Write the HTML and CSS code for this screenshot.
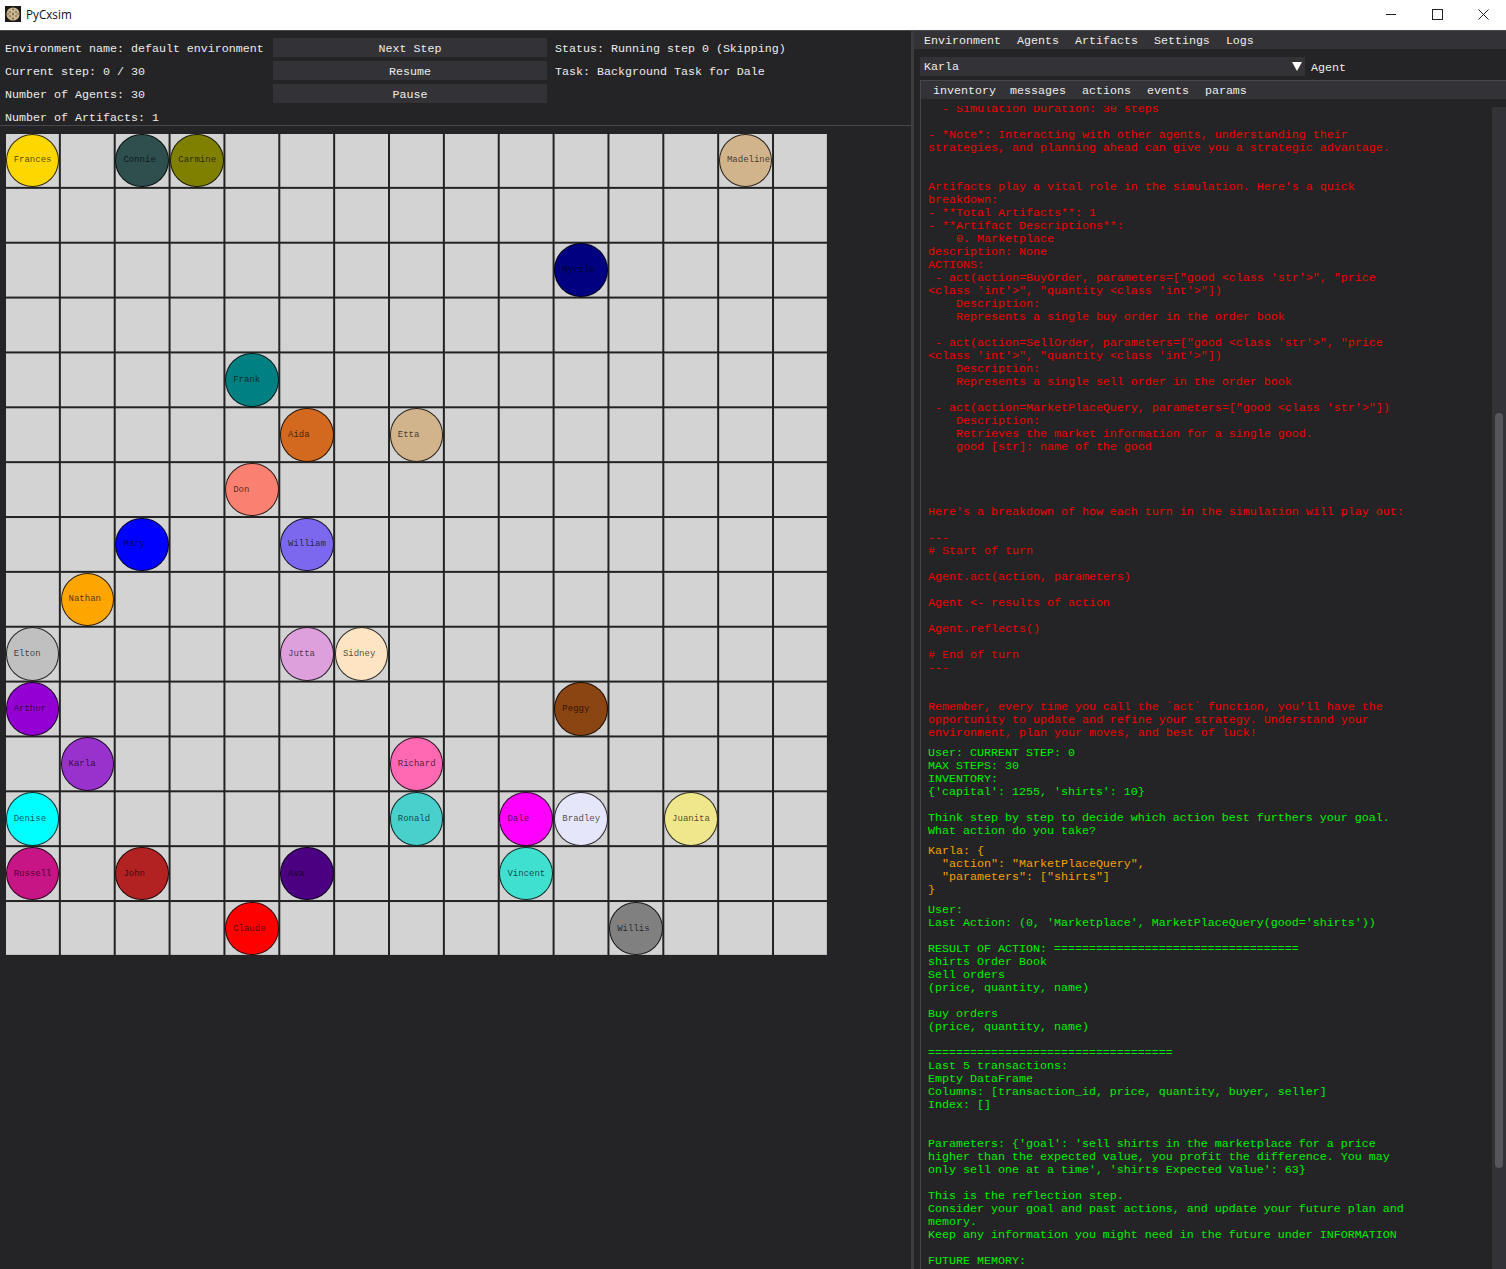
FILE: index.html
```html
<!DOCTYPE html>
<html lang="en">
<head>
  <meta charset="UTF-8" />
  <title>PyCxsim</title>
  <link rel="stylesheet" href="styles.css">
</head>
<body>
  <!-- window title bar -->
  <header class="titlebar">
    <svg class="app-icon" width="16" height="16" viewBox="0 0 16 16">
      <rect width="16" height="16" fill="#1c1a16"/>
      <circle cx="8" cy="8" r="6.6" fill="#c9b48e"/>
      <g fill="#5d4a30">
        <circle cx="8" cy="8" r="1"/><circle cx="5" cy="6" r=".8"/><circle cx="11" cy="6" r=".8"/>
        <circle cx="5" cy="10" r=".8"/><circle cx="11" cy="10" r=".8"/><circle cx="8" cy="3.6" r=".8"/>
        <circle cx="8" cy="12.4" r=".8"/><circle cx="3" cy="8" r=".7"/><circle cx="13" cy="8" r=".7"/>
      </g>
      <g fill="#f0e6cc">
        <circle cx="6.5" cy="4.6" r=".6"/><circle cx="9.8" cy="8" r=".6"/><circle cx="6.2" cy="8" r=".6"/><circle cx="9.5" cy="11.4" r=".6"/>
      </g>
    </svg>
    <span class="app-name">PyCxsim</span>
    <div class="win-controls">
      <span class="win-btn"><svg width="10" height="10" viewBox="0 0 10 10"><path d="M0 5.5H10" stroke="#222" fill="none"/></svg></span>
      <span class="win-btn"><svg width="11" height="11" viewBox="0 0 11 11"><rect x=".5" y=".5" width="10" height="10" stroke="#222" fill="none"/></svg></span>
      <span class="win-btn"><svg width="11" height="11" viewBox="0 0 11 11"><path d="M.5 .5L10.5 10.5M10.5 .5L.5 10.5" stroke="#222" fill="none"/></svg></span>
    </div>
  </header>

  <div class="app">
    <!-- simulation view -->
    <main class="sim-panel">
      <div class="controls">
        <span class="label">Environment name: default environment</span>
        <button class="btn">Next Step</button>
        <span class="label">Status: Running step 0 (Skipping)</span>
        <span class="label">Current step: 0 / 30</span>
        <button class="btn">Resume</button>
        <span class="label">Task: Background Task for Dale</span>
        <span class="label">Number of Agents: 30</span>
        <button class="btn">Pause</button>
        <span></span>
        <span class="label">Number of Artifacts: 1</span>
      </div>
      <div class="board">
        <div class="agent" style="grid-area:1/1;background:#ffd700">Frances</div>
        <div class="agent" style="grid-area:1/3;background:#2f4f4f">Connie</div>
        <div class="agent" style="grid-area:1/4;background:#808000">Carmine</div>
        <div class="agent" style="grid-area:1/14;background:#d2b48c">Madeline</div>
        <div class="agent" style="grid-area:3/11;background:#000080">Myrtle</div>
        <div class="agent" style="grid-area:5/5;background:#008080">Frank</div>
        <div class="agent" style="grid-area:6/6;background:#d2691e">Aida</div>
        <div class="agent" style="grid-area:6/8;background:#d2b48c">Etta</div>
        <div class="agent" style="grid-area:7/5;background:#fa8072">Don</div>
        <div class="agent" style="grid-area:8/3;background:#0000ff">Mary</div>
        <div class="agent" style="grid-area:8/6;background:#7b68ee">William</div>
        <div class="agent" style="grid-area:9/2;background:#ffa500">Nathan</div>
        <div class="agent" style="grid-area:10/1;background:#c0c0c0">Elton</div>
        <div class="agent" style="grid-area:10/6;background:#dda0dd">Jutta</div>
        <div class="agent" style="grid-area:10/7;background:#ffe4c4">Sidney</div>
        <div class="agent" style="grid-area:11/1;background:#9400d3">Arthur</div>
        <div class="agent" style="grid-area:11/11;background:#8b4513">Peggy</div>
        <div class="agent" style="grid-area:12/2;background:#9932cc">Karla</div>
        <div class="agent" style="grid-area:12/8;background:#ff69b4">Richard</div>
        <div class="agent" style="grid-area:13/1;background:#00ffff">Denise</div>
        <div class="agent" style="grid-area:13/8;background:#48d1cc">Ronald</div>
        <div class="agent" style="grid-area:13/10;background:#ff00ff">Dale</div>
        <div class="agent" style="grid-area:13/11;background:#e6e6fa">Bradley</div>
        <div class="agent" style="grid-area:13/13;background:#f0e68c">Juanita</div>
        <div class="agent" style="grid-area:14/1;background:#c71585">Russell</div>
        <div class="agent" style="grid-area:14/3;background:#b22222">John</div>
        <div class="agent" style="grid-area:14/6;background:#4b0082">Ava</div>
        <div class="agent" style="grid-area:14/10;background:#40e0d0">Vincent</div>
        <div class="agent" style="grid-area:15/5;background:#ff0000">Claude</div>
        <div class="agent" style="grid-area:15/12;background:#808080">Willis</div>
      </div>
    </main>

    <!-- inspector -->
    <aside class="side-panel">
      <nav class="menubar">
        <span>Environment</span>
        <span>Agents</span>
        <span>Artifacts</span>
        <span>Settings</span>
        <span>Logs</span>
      </nav>
      <div class="agent-row">
        <div class="combo">
          <span class="combo-value">Karla</span>
          <span class="combo-arrow"></span>
        </div>
        <span class="label">Agent</span>
      </div>
      <section class="child-win">
        <div class="tabbar">
          <span>inventory</span>
          <span>messages</span>
          <span>actions</span>
          <span>events</span>
          <span>params</span>
        </div>
        <div class="tab-body">
          <div class="log">
            <div class="log-inner">
<pre class="msg msg-system">  - Simulation Duration: 30 steps

- *Note*: Interacting with other agents, understanding their
strategies, and planning ahead can give you a strategic advantage.


Artifacts play a vital role in the simulation. Here's a quick
breakdown:
- **Total Artifacts**: 1
- **Artifact Descriptions**:
    0. Marketplace
description: None
ACTIONS:
 - act(action=BuyOrder, parameters=["good &lt;class 'str'&gt;", "price
&lt;class 'int'&gt;", "quantity &lt;class 'int'&gt;"])
    Description:
    Represents a single buy order in the order book

 - act(action=SellOrder, parameters=["good &lt;class 'str'&gt;", "price
&lt;class 'int'&gt;", "quantity &lt;class 'int'&gt;"])
    Description:
    Represents a single sell order in the order book

 - act(action=MarketPlaceQuery, parameters=["good &lt;class 'str'&gt;"])
    Description:
    Retrieves the market information for a single good.
    good [str]: name of the good




Here's a breakdown of how each turn in the simulation will play out:

---
# Start of turn

Agent.act(action, parameters)

Agent &lt;- results of action

Agent.reflects()

# End of turn
---


Remember, every time you call the `act` function, you'll have the
opportunity to update and refine your strategy. Understand your
environment, plan your moves, and best of luck!</pre>
<pre class="msg msg-user">User: CURRENT STEP: 0
MAX STEPS: 30
INVENTORY:
{'capital': 1255, 'shirts': 10}

Think step by step to decide which action best furthers your goal.
What action do you take?</pre>
<pre class="msg msg-agent">Karla: {
  "action": "MarketPlaceQuery",
  "parameters": ["shirts"]
}</pre>
<pre class="msg msg-user">User:
Last Action: (0, 'Marketplace', MarketPlaceQuery(good='shirts'))

RESULT OF ACTION: ===================================
shirts Order Book
Sell orders
(price, quantity, name)

Buy orders
(price, quantity, name)

===================================
Last 5 transactions:
Empty DataFrame
Columns: [transaction_id, price, quantity, buyer, seller]
Index: []


Parameters: {'goal': 'sell shirts in the marketplace for a price
higher than the expected value, you profit the difference. You may
only sell one at a time', 'shirts Expected Value': 63}

This is the reflection step.
Consider your goal and past actions, and update your future plan and
memory.
Keep any information you might need in the future under INFORMATION

FUTURE MEMORY:</pre>
            </div>
          </div>
          <div class="scroll-track"><div class="scroll-thumb"></div></div>
        </div>
      </section>
    </aside>
  </div>
</body>
</html>
```
FILE: styles.css
```css
* { box-sizing: border-box; }
html, body { height: 100%; }
body {
  margin: 0;
  display: flex;
  flex-direction: column;
  overflow: hidden;
  background: #242426;
  color: #ececec;
  font-family: "Liberation Mono", monospace;
  font-size: 11.67px;
  line-height: 13px;
}

/* title bar */
.titlebar {
  height: 30px;
  flex: none;
  display: flex;
  align-items: center;
  padding: 0 0 2px 5px;
  background: #fff;
  color: #111;
  font-family: "Open Sans", sans-serif;
  font-size: 11.7px;
}
.app-name { margin-left: 5px; }
.win-controls { margin-left: auto; display: flex; height: 100%; }
.win-btn {
  width: 46px;
  display: flex;
  align-items: center;
  justify-content: center;
}

.app {
  flex: 1;
  min-height: 0;
  display: flex;
  border-top: 1px solid #48484c;
}

/* left side */
.sim-panel { width: 911px; flex: none; }
.controls {
  height: 95px;
  display: grid;
  grid-template-columns: 260px 274px 1fr;
  grid-auto-rows: 19px;
  gap: 4px 8px;
  padding: 7px 0 0 5px;
  border-bottom: 1px solid #48484c;
}
.label { align-self: center; padding-top: 3px; white-space: nowrap; }
.btn {
  border: 0;
  padding: 3px 0 0;
  background: #333337;
  color: inherit;
  font: inherit;
}
.board {
  width: 823px;
  height: 823px;
  margin: 7px 0 0 5px;
  display: grid;
  grid-template-columns: repeat(15, 1fr);
  grid-template-rows: repeat(15, 1fr);
  background-color: #d3d3d3;
  background-image:
    linear-gradient(to right, #222 2px, transparent 2px),
    linear-gradient(to bottom, #222 2px, transparent 2px);
  background-size: calc(100% / 15) calc(100% / 15);
  background-position: -1px -1px;
}
.agent {
  width: 53.5px;
  height: 53.5px;
  align-self: center;
  justify-self: center;
  display: flex;
  align-items: center;
  padding: 1px 0 0 7px;
  border: 1.5px solid rgba(0, 0, 0, 0.8);
  border-radius: 50%;
  color: rgba(0, 0, 0, 0.7);
  font-size: 9px;
  white-space: nowrap;
}

/* right side */
.side-panel {
  flex: 1;
  min-width: 0;
  display: flex;
  flex-direction: column;
  border-left: 3px solid #3c3c40;
}
.menubar {
  height: 18px;
  flex: none;
  display: flex;
  align-items: center;
  gap: 16px;
  padding: 3px 0 0 10px;
  background: #333337;
}
.agent-row {
  display: flex;
  align-items: center;
  gap: 6px;
  padding: 8px 0 4px 6px;
  flex: none;
}
.combo {
  width: 385px;
  height: 19px;
  display: flex;
  align-items: center;
  justify-content: space-between;
  padding: 0 2px 0 4px;
  background: #333337;
}
.combo-value { padding-top: 2px; }
.combo-arrow {
  width: 0;
  height: 0;
  margin-right: 1px;
  border-left: 5px solid transparent;
  border-right: 5px solid transparent;
  border-top: 9px solid #fff;
}
.child-win {
  flex: 1;
  min-height: 0;
  margin-left: 6px;
  display: flex;
  flex-direction: column;
  border-top: 1px solid #48484c;
  border-left: 1px solid #48484c;
}
.tabbar {
  height: 18px;
  flex: none;
  display: flex;
  align-items: center;
  gap: 16px;
  padding: 3px 0 0 12px;
  background: #333337;
}
.tabbar span:first-child { margin-right: -2px; }
.tab-body {
  flex: 1;
  min-height: 0;
  display: flex;
  padding-top: 7px;
}
.log { flex: 1; min-width: 0; overflow: hidden; padding-left: 7px; }
.log-inner {
  margin-top: -3px;
  display: flex;
  flex-direction: column;
  gap: 7px;
}
.msg { margin: 0; font: inherit; white-space: pre; }
.msg-system { color: #f00000; }
.msg-user { color: #00f000; }
.msg-agent { color: #f5a000; }
.scroll-track {
  width: 14px;
  flex: none;
  margin-top: 1px;
  padding: 306px 3px 0;
  background: #333337;
}
.scroll-thumb {
  width: 8px;
  height: 755px;
  border-radius: 4px;
  background: #56565b;
}
```
